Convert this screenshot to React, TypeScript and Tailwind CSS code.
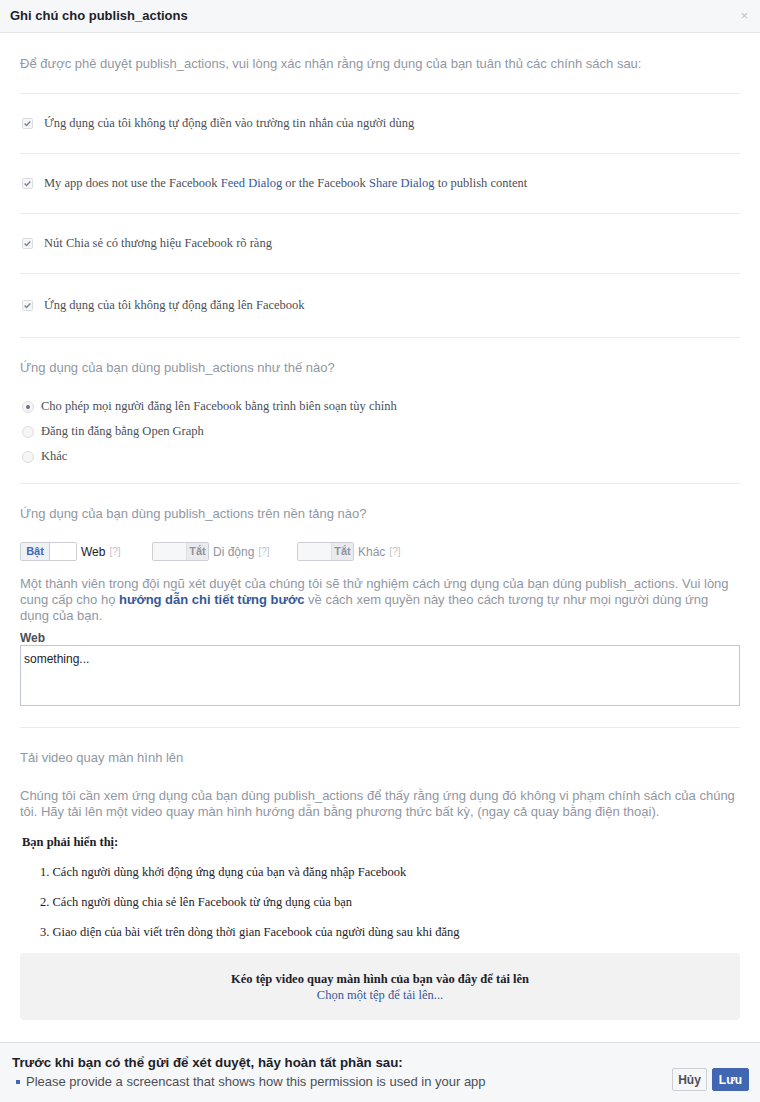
import React from 'react'

const sans = "font-['Liberation_Sans',Arial,sans-serif]"
const serif = "font-['Liberation_Serif','Times_New_Roman',serif]"

function Check() {
    return (
        <svg width="11" height="11" viewBox="0 0 11 11" className="shrink-0">
            <rect x="0.5" y="0.5" width="10" height="10" rx="1" fill="#f5f6f7" stroke="#dadde1" />
            <path d="M2.6 5.6 L4.5 7.4 L8.4 3.4" fill="none" stroke="#7f858e" strokeWidth="1.4" />
        </svg>
    )
}

function Radio({ on }: { on?: boolean }) {
    return (
        <svg width="12" height="12" viewBox="0 0 12 12" className="shrink-0">
            <circle cx="6" cy="6" r="5.5" fill="#f5f6f7" stroke="#dadde1" />
            {on && <circle cx="6" cy="6" r="2" fill="#6b7079" />}
        </svg>
    )
}

function Toggle({ on, label }: { on?: boolean; label: string }) {
    return (
        <div className="flex items-center">
            <div className="flex h-[19px] w-[57px] overflow-hidden rounded-[2px] border border-[#ccd0d5]">
                {on ? (
                    <>
                        <div className={`${sans} flex w-[29px] items-center justify-center border-r border-[#ccd0d5] bg-[#eef1f6] text-[11px] font-bold text-[#4267b2]`}>Bật</div>
                        <div className="flex-1 bg-white" />
                    </>
                ) : (
                    <>
                        <div className="flex-1 bg-[#f6f7f9]" />
                        <div className={`${sans} flex w-[22px] items-center justify-center border-l border-[#dddfe2] bg-[#e9ebee] text-[11px] font-bold text-[#90949c]`}>Tắt</div>
                    </>
                )}
            </div>
            <span className={`${sans} ml-[4px] text-[12px] ${on ? 'text-[#1d2129]' : 'text-[#90949c]'}`}>{label}</span>
            <span className={`${sans} ml-[4px] text-[10px] text-[#bec3c9]`}>[?]</span>
        </div>
    )
}

const checks: React.ReactNode[] = [
    'Ứng dụng của tôi không tự động điền vào trường tin nhắn của người dùng',
    <>My app does not use the Facebook <span className="text-[#365899]">Feed Dialog</span> or the Facebook <span className="text-[#365899]">Share Dialog</span> to publish content</>,
    'Nút Chia sẻ có thương hiệu Facebook rõ ràng',
    'Ứng dụng của tôi không tự động đăng lên Facebook',
]

export default function App() {
    return (
        <div className={`${sans} flex h-[1102px] w-[760px] flex-col overflow-hidden bg-white`}>
            <div className="flex h-[33px] shrink-0 items-center justify-between border-b border-[#e5e5e5] bg-[#f6f7f9] pl-[10px] pr-[12px]">
                <h1 className="text-[13px] font-bold text-[#1d2129]">Ghi chú cho publish_actions</h1>
                <span className="text-[13px] text-[#bec2c9]">×</span>
            </div>

            <div className="min-h-0 flex-1 overflow-hidden px-[20px]">
                <p className="pb-[22px] pt-[23px] text-[13px] leading-[15px] text-[#9197a3]">Để được phê duyệt publish_actions, vui lòng xác nhận rằng ứng dụng của bạn tuân thủ các chính sách sau:</p>

                {checks.map((c, i) => (
                    <div key={i} className={`flex items-center gap-[11px] border-t border-[#e9ebee] pl-[2px] ${i === 3 ? 'h-[64px]' : 'h-[60px]'}`}>
                        <Check />
                        <span className={`${serif} text-[12.5px] text-[#4b4f56]`}>{c}</span>
                    </div>
                ))}

                <div className="border-t border-[#e9ebee] pb-[18px] pt-[22px]">
                    <p className="text-[13px] leading-[15px] text-[#9197a3]">Ứng dụng của bạn dùng publish_actions như thế nào?</p>
                    <div className="mt-[23px] flex flex-col gap-[8px] pl-[2px]">
                        {['Cho phép mọi người đăng lên Facebook bằng trình biên soạn tùy chỉnh', 'Đăng tin đăng bằng Open Graph', 'Khác'].map((r, i) => (
                            <div key={r} className="flex h-[17px] items-center gap-[7px]">
                                <Radio on={i === 0} />
                                <span className={`${serif} text-[12.5px] text-[#4b4f56]`}>{r}</span>
                            </div>
                        ))}
                    </div>
                </div>

                <div className="border-t border-[#e9ebee] pt-[22px]">
                    <p className="text-[13px] leading-[15px] text-[#9197a3]">Ứng dụng của bạn dùng publish_actions trên nền tảng nào?</p>
                    <div className="mt-[21px] flex items-center">
                        <div className="w-[132px]"><Toggle on label="Web" /></div>
                        <div className="w-[145px]"><Toggle label="Di động" /></div>
                        <Toggle label="Khác" />
                    </div>
                    <p className="mt-[15px] text-[13px] leading-[16px] text-[#9197a3]">
                        Một thành viên trong đội ngũ xét duyệt của chúng tôi sẽ thử nghiệm cách ứng dụng của bạn dùng publish_actions. Vui lòng cung cấp cho họ <span className="font-bold text-[#365899]">hướng dẫn chi tiết từng bước</span> về cách xem quyền này theo cách tương tự như mọi người dùng ứng dụng của bạn.
                    </p>
                    <div className="mt-[7px] text-[12px] font-bold leading-[14px] text-[#4b4f56]">Web</div>
                    <div className="h-[61px] border border-[#bdc7d8] px-[3px] pt-[4px] text-[12px] text-[#1d2129]">something...</div>
                </div>

                <div className="mt-[21px] border-t border-[#e9ebee] pt-[22px]">
                    <p className="text-[13px] leading-[15px] text-[#9197a3]">Tải video quay màn hình lên</p>
                    <p className="mt-[23px] text-[13px] leading-[16px] text-[#9197a3]">Chúng tôi cần xem ứng dụng của bạn dùng publish_actions để thấy rằng ứng dụng đó không vi phạm chính sách của chúng tôi. Hãy tải lên một video quay màn hình hướng dẫn bằng phương thức bất kỳ, (ngay cả quay bằng điện thoại).</p>
                    <p className={`${serif} ml-[2px] mt-[15px] text-[12.5px] font-bold leading-[15px] text-[#1d2129]`}>Bạn phải hiển thị:</p>
                    <ol className={`${serif} mt-[15px] flex flex-col gap-[15px] pl-[20px] text-[12.5px] leading-[15px] text-[#1d2129]`}>
                        <li>1. Cách người dùng khởi động ứng dụng của bạn và đăng nhập Facebook</li>
                        <li>2. Cách người dùng chia sẻ lên Facebook từ ứng dụng của bạn</li>
                        <li>3. Giao diện của bài viết trên dòng thời gian Facebook của người dùng sau khi đăng</li>
                    </ol>
                    <div className={`${serif} mt-[13px] flex h-[67px] flex-col items-center justify-center rounded-[4px] bg-[#f2f2f2] leading-[16px]`}>
                        <div className="text-[12.5px] font-bold text-[#1d2129]">Kéo tệp video quay màn hình của bạn vào đây để tải lên</div>
                        <div className="text-[12.5px] text-[#365899]">Chọn một tệp để tải lên...</div>
                    </div>
                </div>
            </div>

            <div className="flex h-[60px] shrink-0 items-center justify-between border-t border-[#dddfe2] bg-[#f6f7f9] pl-[12px] pr-[11px]">
                <div className="flex flex-col">
                    <div className="text-[13.3px] font-bold leading-[16px] text-[#1d2129]">Trước khi bạn có thể gửi để xét duyệt, hãy hoàn tất phần sau:</div>
                    <div className="mt-[3px] flex items-center gap-[6px] pl-[4px] text-[13px] leading-[16px] text-[#4b4f56]">
                        <span className="h-[4px] w-[4px] bg-[#4267b2]" />
                        Please provide a screencast that shows how this permission is used in your app
                    </div>
                </div>
                <div className="mt-[14px] flex gap-[5px]">
                    <button className="h-[23px] w-[35px] rounded-[2px] border border-[#ccd0d5] bg-[#f6f7f9] text-[12px] font-bold text-[#4b4f56]">Hủy</button>
                    <button className="h-[23px] w-[37px] rounded-[2px] border border-[#4267b2] bg-[#4267b2] text-[12px] font-bold text-white">Lưu</button>
                </div>
            </div>
        </div>
    )
}
